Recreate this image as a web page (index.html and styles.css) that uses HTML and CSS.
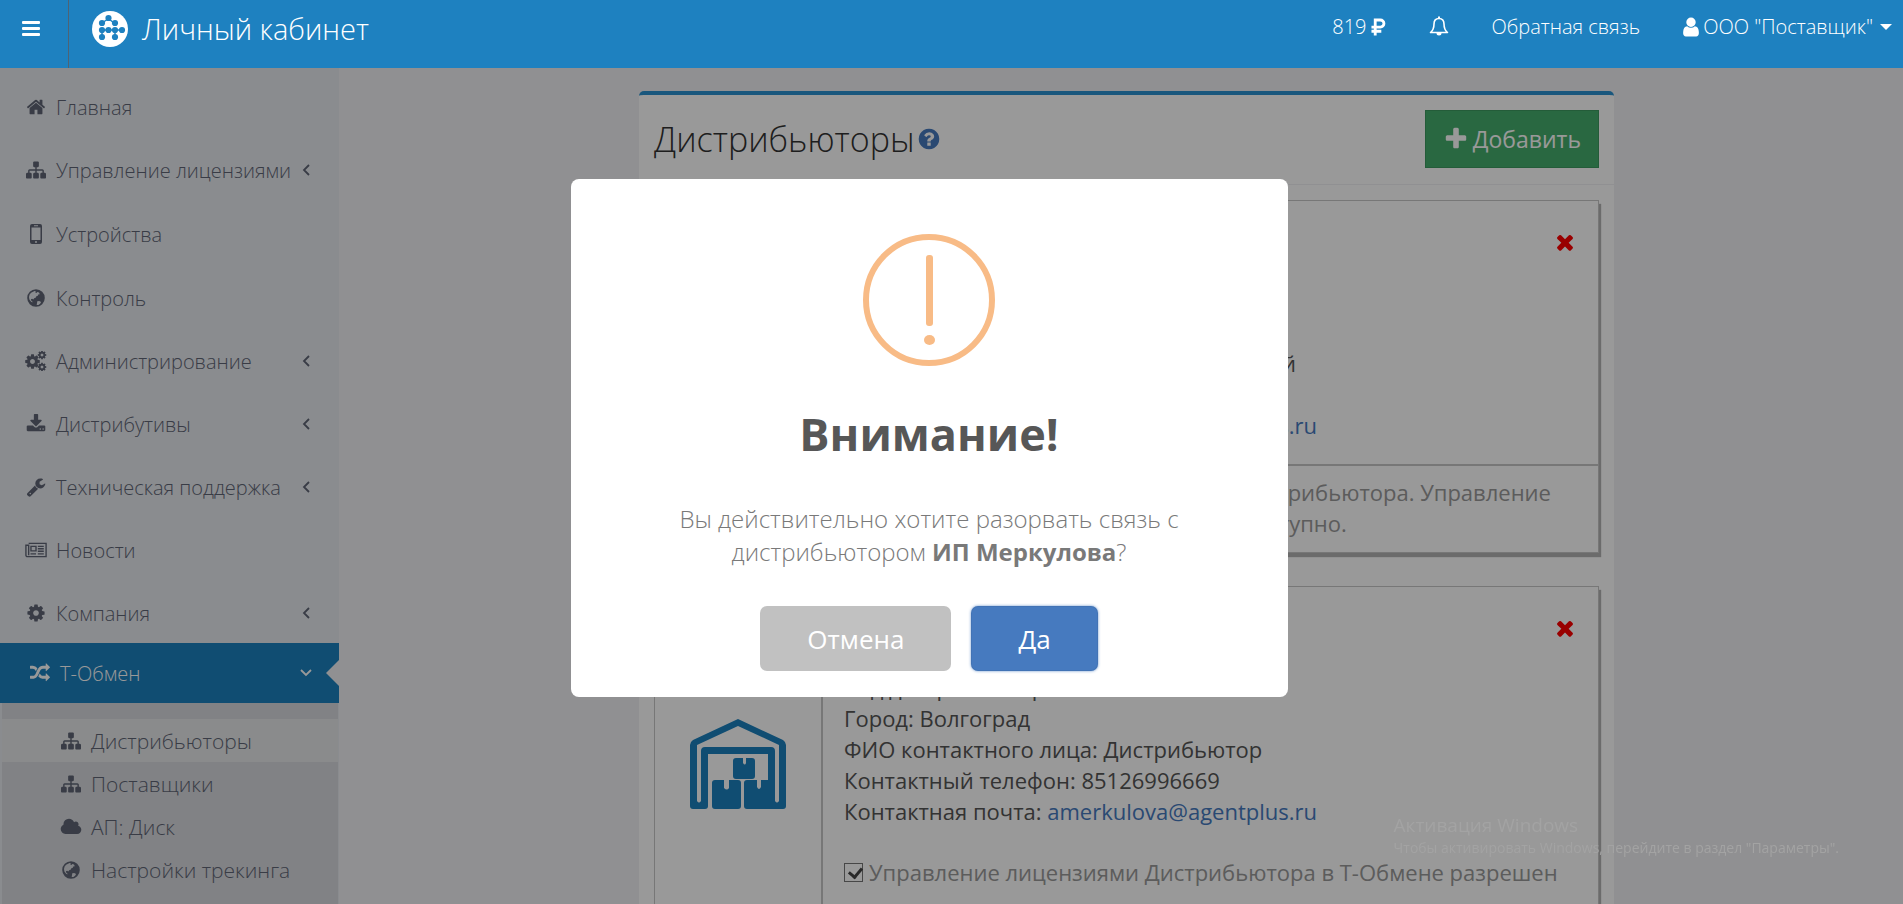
FILE: index.html
```html
<!DOCTYPE html>
<html lang="ru">
<head>
    <meta charset="UTF-8">
    <meta name="viewport" content="width=device-width, initial-scale=1.0">
    <title>Личный кабинет</title>
    <link rel="stylesheet" href="styles.css">
</head>
<body>
    <!-- Icon set -->
    <svg class="sprite" aria-hidden="true">
        <symbol id="home" viewBox="0 0 1792 1792"><path d="M1472 992v480q0 26-19 45t-45 19h-384v-384h-256v384h-384q-26 0-45-19t-19-45v-480q0-1 .5-3t.5-3l575-474 575 474q1 2 1 6zm223-69l-62 74q-8 9-21 11h-3q-13 0-21-7l-692-577-692 577q-12 8-24 7-13-2-21-11l-62-74q-8-10-7-23.5t11-21.5l719-599q32-26 76-26t76 26l244 204v-195q0-14 9-23t23-9h192q14 0 23 9t9 23v408l219 182q10 8 11 21.5t-7 23.5z"/></symbol>
        <symbol id="sitemap" viewBox="0 0 1792 1792"><path d="M1792 1248v320q0 40-28 68t-68 28h-320q-40 0-68-28t-28-68v-320q0-40 28-68t68-28h96v-192h-512v192h96q40 0 68 28t28 68v320q0 40-28 68t-68 28h-320q-40 0-68-28t-28-68v-320q0-40 28-68t68-28h96v-192h-512v192h96q40 0 68 28t28 68v320q0 40-28 68t-68 28h-320q-40 0-68-28t-28-68v-320q0-40 28-68t68-28h96v-192q0-52 38-90t90-38h512v-192h-96q-40 0-68-28t-28-68v-320q0-40 28-68t68-28h320q40 0 68 28t28 68v320q0 40-28 68t-68 28h-96v192h512q52 0 90 38t38 90v192h96q40 0 68 28t28 68z"/></symbol>
        <symbol id="mobile" viewBox="0 0 20 20"><path fill-rule="evenodd" d="M6 0h8a2 2 0 0 1 2 2v16a2 2 0 0 1-2 2H6a2 2 0 0 1-2-2V2a2 2 0 0 1 2-2zM5.500 3.500v12.500h9V3.500zM8 1.200v1h4v-1zM10 17a1 1 0 1 0 0 2 1 1 0 0 0 0-2z"/></symbol>
        <symbol id="globe" viewBox="0 0 20 20"><path fill-rule="evenodd" d="M10 1.200a8.800 8.800 0 1 0 0 17.600 8.800 8.800 0 0 0 0-17.600zM8.500 3l1.300.2-.5 1.300 1.200.5.800-1 1.700.6.8 1.600-1.600.3-.4 1.200-1.500.5-.4 1.300-1.700.7-.9 1.200-1.100-.7-1.300.5.300 1.500 1 .4.2 1.500-1.500-1.200-1.500-2-.4-2.300.6-2.500 1.500-1.900zM11.300 13.200l1.900-.3 1.900 1.200-1 1.700-1.700 1.100-1.700.1z"/></symbol>
        <symbol id="cog" viewBox="0 0 1792 1792"><path d="M1152 896q0-106-75-181t-181-75-181 75-75 181 75 181 181 75 181-75 75-181zm512-109v222q0 12-8 23t-20 13l-185 28q-19 54-39 91 35 50 107 138 10 12 10 25t-9 23q-27 37-99 108t-94 71q-12 0-26-9l-138-108q-44 23-91 38-16 136-29 186-7 28-36 28h-222q-14 0-24.500-8.500t-11.500-21.500l-28-184q-49-16-90-37l-141 107q-10 9-25 9-14 0-25-11-126-114-165-168-7-10-7-23 0-12 8-23 15-21 51-66.500t54-70.500q-27-50-41-99l-183-27q-13-2-21-12.500t-8-23.500v-222q0-12 8-23t19-13l186-28q14-46 39-92-40-57-107-138-10-12-10-24 0-10 9-23 26-36 98.500-107.500t94.500-71.500q13 0 26 10l138 107q44-23 91-38 16-136 29-186 7-28 36-28h222q14 0 24.500 8.500t11.500 21.500l28 184q49 16 90 37l142-107q9-9 24-9 13 0 25 10 129 119 165 170 7 8 7 22 0 12-8 23-15 21-51 66.500t-54 70.500q26 50 41 98l183 28q13 2 21 12.500t8 23.500z"/></symbol>
        <symbol id="cogs" viewBox="0 0 22 20"><use href="#cog" x="-1" y="2" width="17" height="17"/><use href="#cog" x="12" y="-1" width="10" height="10"/><use href="#cog" x="12" y="11" width="10" height="10"/></symbol>
        <symbol id="download" viewBox="0 0 1792 1792"><path d="M1344 1344q0-26-19-45t-45-19-45 19-19 45 19 45 45 19 45-19 19-45zm256 0q0-26-19-45t-45-19-45 19-19 45 19 45 45 19 45-19 19-45zm128-224v320q0 40-28 68t-68 28h-1472q-40 0-68-28t-28-68v-320q0-40 28-68t68-28h465l135 136q58 56 136 56t136-56l136-136h464q40 0 68 28t28 68zm-325-569q17 41-14 70l-448 448q-18 19-45 19t-45-19l-448-448q-31-29-14-70 17-39 59-39h256v-448q0-26 19-45t45-19h256q26 0 45 19t19 45v448h256q42 0 59 39z"/></symbol>
        <symbol id="wrench" viewBox="0 0 1792 1792"><path d="M448 1472q0-26-19-45t-45-19-45 19-19 45 19 45 45 19 45-19 19-45zm644-420l-682 682q-37 37-90 37-52 0-91-37l-106-108q-38-36-38-90 0-53 38-91l681-681q39 98 114.500 173.500t173.500 114.500zm634-435q0 39-23 106-47 134-164.500 217.500t-258.500 83.500q-185 0-316.500-131.500t-131.500-316.500 131.500-316.500 316.500-131.500q58 0 121.500 16.500t107.500 46.500q16 11 16 28t-16 28l-293 169v224l193 107q5-3 79-48.500t135.500-81 70.500-35.500q15 0 23.500 10t8.500 25z"/></symbol>
        <symbol id="news" viewBox="0 0 24 20"><path fill="none" stroke="currentColor" stroke-width="1.500" d="M4 2.800h19v14.400H2.500A1.500 1.500 0 0 1 1 15.700V4.800h3v11M6.500 6h5.500v5H6.500zM6 14.200h6M14 6h6.500M14 8.700h6.500M14 11.400h6.500M14 14.200h6.500"/></symbol>
        <symbol id="random" viewBox="0 0 1792 1792"><path d="M666 481q-60 92-137 273-22-45-37-72.500t-40.500-63.500-51-56.500-63-35-81.500-14.500h-224q-14 0-23-9t-9-23v-192q0-14 9-23t23-9h224q250 0 410 225zm1126 799q0 14-9 23l-320 320q-9 9-23 9-13 0-22.500-9.500t-9.500-22.500v-192q-32 0-85 .5t-81 1-73-1-71-5-64-10.500-63-18.500-58-28.500-59-40-55-53.500-56-69.500q59-93 136-273 22 45 37 72.500t40.500 63.500 51 56.500 63 35 81.500 14.500h256v-192q0-14 9-23t23-9q12 0 24 10l319 319q9 9 9 23zm0-896q0 14-9 23l-320 320q-9 9-23 9-13 0-22.500-9.500t-9.500-22.500v-192h-256q-48 0-87 15t-69 45-51 61.500-45 77.500q-32 62-78 171-29 66-49.500 111t-54 105-64 100-74 83-90 68.500-106.500 42-128 16.500h-224q-14 0-23-9t-9-23v-192q0-14 9-23t23-9h224q48 0 87-15t69-45 51-61.500 45-77.500q32-62 78-171 29-66 49.500-111t54-105 64-100 74-83 90-68.500 106.500-42 128-16.500h256v-192q0-14 9-23t23-9q12 0 24 10l319 319q9 9 9 23z"/></symbol>
        <symbol id="cloud" viewBox="0 0 2048 1792"><path d="M1984 1152q0 159-112.500 271.500t-271.500 112.500h-1088q-185 0-316.500-131.500t-131.500-316.500q0-132 71-241.500t187-163.500q-2-28-2-43 0-212 150-362t362-150q158 0 286.500 88t187.500 230q70-62 166-62 106 0 181 75t75 181q0 75-41 138 129 30 213 134.500t84 239.500z"/></symbol>
        <symbol id="plus" viewBox="0 0 1792 1792"><path d="M1600 736v192q0 40-28 68t-68 28h-416v416q0 40-28 68t-68 28h-192q-40 0-68-28t-28-68v-416h-416q-40 0-68-28t-28-68v-192q0-40 28-68t68-28h416v-416q0-40 28-68t68-28h192q40 0 68 28t28 68v416h416q40 0 68 28t28 68z"/></symbol>
        <symbol id="times" viewBox="0 0 1792 1792"><path d="M1490 1322q0 40-28 68l-136 136q-28 28-68 28t-68-28l-294-294-294 294q-28 28-68 28t-68-28l-136-136q-28-28-28-68t28-68l294-294-294-294q-28-28-28-68t28-68l136-136q28-28 68-28t68 28l294 294 294-294q28-28 68-28t68 28l136 136q28 28 28 68t-28 68l-294 294 294 294q28 28 28 68z"/></symbol>
        <symbol id="question" viewBox="0 0 1792 1792"><path d="M1024 1376v-192q0-14-9-23t-23-9h-192q-14 0-23 9t-9 23v192q0 14 9 23t23 9h192q14 0 23-9t9-23zm256-672q0-88-55.500-163t-138.500-116-170-41q-243 0-371 213-15 24 8 42l132 100q7 6 19 6 16 0 25-12 53-68 86-92 34-24 86-24 48 0 85.500 26t37.500 59q0 38-20 61t-68 45q-63 28-115.500 86.500t-52.500 125.500v36q0 14 9 23t23 9h192q14 0 23-9t9-23q0-19 21.500-49.500t54.500-49.500q32-18 49-28.500t46-35 44.500-48 28-60.500 12.500-81zm384 192q0 209-103 385.500t-279.500 279.500-385.500 103-385.500-103-279.500-279.500-103-385.500 103-385.500 279.500-279.500 385.500-103 385.500 103 279.500 279.500 103 385.500z"/></symbol>
        <symbol id="user" viewBox="0 0 1792 1792"><path d="M1536 1399q0 109-62.500 187t-150.500 78h-854q-88 0-150.500-78t-62.500-187q0-85 8.500-160.500t31.500-152 58.500-131 94-89 134.500-34.500q131 128 313 128t313-128q76 0 134.500 34.500t94 89 58.500 131 31.500 152 8.500 160.500zm-256-887q0 159-112.500 271.500t-271.500 112.500-271.500-112.500-112.500-271.500 112.500-271.500 271.500-112.500 271.500 112.500 112.500 271.500z"/></symbol>
        <symbol id="chevron" viewBox="0 0 12 12"><path fill="none" stroke="currentColor" stroke-width="1.800" d="M9 1L4 6l5 5"/></symbol>
        <symbol id="bell" viewBox="0 0 20 20"><path fill="none" stroke="currentColor" stroke-width="1.600" stroke-linejoin="round" d="M10 2c-3.500 0-5 2.500-5 5.500 0 4-1 6.500-3.500 8.500h17c-2.500-2-3.500-4.500-3.500-8.500C15 4.500 13.500 2 10 2z"/><path d="M9 0h2v2H9zM7.500 16.500h5a2.500 2.500 0 0 1-5 0z"/></symbol>
        <symbol id="ruble" viewBox="0 0 16 18"><path fill="none" stroke="currentColor" stroke-width="3" d="M4.500 18V1.500H10a3.700 3.700 0 0 1 0 7.600H0.500M0.500 13.500H11"/></symbol>
        <symbol id="bars" viewBox="0 0 18 15"><rect width="18" height="3" rx="1"/><rect y="6" width="18" height="3" rx="1"/><rect y="12" width="18" height="3" rx="1"/></symbol>
        <symbol id="warehouse" viewBox="0 0 96 90">
            <path fill-rule="evenodd" d="M48 0l45 21q3 2 3 5v61q0 3-3 3H57q-3 0-3-3V64q0-3 3-3h10v7q2 4 4 0v-7h7V35H18v52q0 3-3 3H3q-3 0-3-3V26q0-3 3-5zM48 7L7 26v56q2 3 4 0V32q0-4 4-4h66q4 0 4 4v50q2 3 4 0V26z"/>
            <path d="M46 39h7v5q2 3 3 0v-5h6q3 0 3 3v15q0 3-3 3H46q-3 0-3-3V42q0-3 3-3zM25 61h9v8q3 3 5 0v-8h9q3 0 3 3v23q0 3-3 3H25q-3 0-3-3V64q0-3 3-3z"/>
        </symbol>
    </svg>

    <header class="header">
        <button class="menu_toggle" type="button" aria-label="Меню"><svg class="bars"><use href="#bars"/></svg></button>
        <a class="brand" href="#">
            <svg class="brand_logo" viewBox="0 0 36 36" aria-hidden="true">
                <circle cx="18" cy="18" r="18" fill="#fff"/>
                <path stroke="#1e81c0" stroke-width="1.500" d="M10 12l6-4M22 12l-5-4M10 19h20M10 19v7M23 19v7"/>
                <g fill="#1e81c0">
                    <circle cx="16.500" cy="7" r="3.100"/><circle cx="10" cy="12" r="3.100"/><circle cx="23" cy="12" r="3.100"/>
                    <circle cx="10" cy="19" r="3.100"/><circle cx="16.500" cy="19" r="3.100"/><circle cx="23" cy="19" r="3.100"/><circle cx="30" cy="19" r="3.100"/>
                    <circle cx="10" cy="26" r="3.100"/><circle cx="23" cy="26" r="3.100"/>
                </g>
            </svg>
            Личный кабинет
        </a>
        <nav class="top_nav">
            <a href="#" class="balance">819 <svg class="ruble"><use href="#ruble"/></svg></a>
            <a href="#" aria-label="Уведомления"><svg class="bell"><use href="#bell"/></svg></a>
            <a href="#">Обратная связь</a>
            <a href="#" class="account"><svg class="user"><use href="#user"/></svg>ООО "Поставщик"<span class="caret"></span></a>
        </nav>
    </header>

    <div class="page">
        <aside class="sidebar">
            <ul class="menu">
                <li><a href="#"><svg class="icon"><use href="#home"/></svg>Главная</a></li>
                <li><a href="#"><svg class="icon"><use href="#sitemap"/></svg>Управление лицензиями<svg class="arrow"><use href="#chevron"/></svg></a></li>
                <li><a href="#" class="tall"><svg class="icon"><use href="#mobile"/></svg>Устройства</a></li>
                <li><a href="#"><svg class="icon"><use href="#globe"/></svg>Контроль</a></li>
                <li><a href="#"><svg class="icon"><use href="#cogs"/></svg>Администрирование<svg class="arrow"><use href="#chevron"/></svg></a></li>
                <li><a href="#"><svg class="icon"><use href="#download"/></svg>Дистрибутивы<svg class="arrow"><use href="#chevron"/></svg></a></li>
                <li><a href="#"><svg class="icon"><use href="#wrench"/></svg>Техническая поддержка<svg class="arrow"><use href="#chevron"/></svg></a></li>
                <li><a href="#"><svg class="icon"><use href="#news"/></svg>Новости</a></li>
                <li><a href="#"><svg class="icon"><use href="#cog"/></svg>Компания<svg class="arrow"><use href="#chevron"/></svg></a></li>
                <li class="active">
                    <a href="#"><svg class="icon"><use href="#random"/></svg>Т-Обмен<svg class="arrow arrow_open"><use href="#chevron"/></svg></a>
                    <ul class="submenu">
                        <li class="current"><a href="#"><svg class="icon"><use href="#sitemap"/></svg>Дистрибьюторы</a></li>
                        <li><a href="#"><svg class="icon"><use href="#sitemap"/></svg>Поставщики</a></li>
                        <li><a href="#"><svg class="icon"><use href="#cloud"/></svg>АП: Диск</a></li>
                        <li><a href="#"><svg class="icon"><use href="#globe"/></svg>Настройки трекинга</a></li>
                    </ul>
                </li>
            </ul>
        </aside>

        <main class="content">
            <section class="panel">
                <div class="panel_head">
                    <h1>Дистрибьюторы<svg class="help"><use href="#question"/></svg></h1>
                    <button class="btn_add" type="button"><svg class="plus"><use href="#plus"/></svg>Добавить</button>
                </div>
                <div class="panel_body">
                    <article class="card">
                        <div class="card_main">
                            <div class="card_logo"><svg class="warehouse"><use href="#warehouse"/></svg></div>
                            <div class="card_info">
                                <button class="remove" type="button" aria-label="Удалить"><svg><use href="#times"/></svg></button>
                                <p>ООО Дистрибьютор</p>
                                <p>Код дистрибьютора: 1024</p>
                                <p>Город: Волгоград</p>
                                <p>ФИО контактного лица: Меркулов Андрей</p>
                                <p>Контактный телефон: 85126996669</p>
                                <p>Контактная почта: <a href="#">amerkulova@agentplus.ru</a></p>
                            </div>
                        </div>
                        <div class="card_note">Ожидается подтверждение связи от Дистрибьютора. Управление лицензиями Дистрибьютора пока недоступно.</div>
                    </article>

                    <article class="card">
                        <div class="card_main">
                            <div class="card_logo"><svg class="warehouse"><use href="#warehouse"/></svg></div>
                            <div class="card_info">
                                <button class="remove" type="button" aria-label="Удалить"><svg><use href="#times"/></svg></button>
                                <p>ИП Меркулова</p>
                                <p>Код дистрибьютора: 1025</p>
                                <p>Город: Волгоград</p>
                                <p>ФИО контактного лица: Дистрибьютор</p>
                                <p>Контактный телефон: 85126996669</p>
                                <p>Контактная почта: <a href="#">amerkulova@agentplus.ru</a></p>
                                <label class="allow"><input type="checkbox" checked>Управление лицензиями Дистрибьютора в Т-Обмене разрешен</label>
                            </div>
                        </div>
                    </article>
                </div>
            </section>
        </main>
    </div>

    <div class="overlay"></div>

    <!-- Confirm dialog -->
    <div class="modal" role="dialog" aria-labelledby="modalTitle">
        <div class="modal_icon"><span class="mark_line"></span><span class="mark_dot"></span></div>
        <h2 id="modalTitle">Внимание!</h2>
        <p>Вы действительно хотите разорвать связь с дистрибьютором <b>ИП Меркулова</b>?</p>
        <div class="modal_buttons">
            <button class="btn_cancel" type="button">Отмена</button>
            <button class="btn_ok" type="button">Да</button>
        </div>
    </div>

    <div class="watermark">
        <div class="watermark_title">Активация Windows</div>
        <div>Чтобы активировать Windows, перейдите в раздел "Параметры".</div>
    </div>
</body>
</html>
```
FILE: styles.css
```css
* {
    box-sizing: border-box;
}

body {
    margin: 0;
    height: 100vh;
    overflow: hidden;
    font-family: 'Open Sans', sans-serif;
    font-size: 20px;
    font-weight: 300;
    background: #f1f1f4;
    color: #555;
}

a {
    color: #467abf;
    text-decoration: none;
}

b {
    font-weight: 700;
}

button {
    font-family: inherit;
    border: none;
    cursor: pointer;
}

svg {
    fill: currentColor;
    flex-shrink: 0;
}

.sprite {
    position: absolute;
    width: 0;
    height: 0;
}

/* Header stays above the overlay */
.header {
    position: relative;
    z-index: 20;
    display: flex;
    height: 68px;
    background: #1e81c0;
    color: #fff;
}

.header a {
    color: #fff;
}

.menu_toggle {
    width: 69px;
    padding: 0 28px 11px 22px;
    background: none;
    border-right: 1px solid #4d6375;
    color: #fff;
}

.bars {
    display: block;
    width: 18px;
    height: 15px;
}

.brand {
    display: flex;
    align-items: center;
    gap: 14px;
    padding: 0 0 11px 23px;
    font-size: 29px;
}

.brand_logo {
    width: 36px;
    height: 36px;
}

.top_nav {
    display: flex;
    gap: 43px;
    align-items: center;
    margin-left: auto;
    padding: 0 11px 15px 0;
}

.top_nav a {
    display: flex;
    align-items: center;
    gap: 4px;
}

.ruble {
    width: 15px;
    height: 18px;
}

.bell {
    width: 20px;
    height: 21px;
}

.user {
    width: 22px;
    height: 22px;
    margin: 0 -3px;
}

.caret {
    margin-left: 3px;
    border: 6px solid transparent;
    border-top-color: #fff;
    border-bottom: 0;
}

.page {
    display: flex;
    height: calc(100vh - 68px);
}

/* Sidebar */
.sidebar {
    width: 339px;
    flex-shrink: 0;
    background: #e6e9ee;
    overflow: hidden;
}

.menu,
.submenu {
    margin: 0;
    padding: 0;
    list-style: none;
}

.menu {
    padding-top: 6px;
}

.menu > li {
    margin-top: 3px;
}

.menu a {
    display: flex;
    align-items: center;
    height: 60px;
    padding: 0 27px 0 25px;
    color: #5f6575;
    white-space: nowrap;
}

.menu .tall {
    height: 62px;
}

.icon {
    width: 22px;
    height: 20px;
    margin-right: 9px;
}

.arrow {
    width: 12px;
    height: 12px;
    margin-left: auto;
}

.arrow_open {
    transform: rotate(-90deg);
}

.menu > .active {
    margin-top: 0;
}

.active > a {
    position: relative;
    padding-left: 29px;
    background: #1b80be;
    color: #fff;
}

.active > a::after {
    content: '';
    position: absolute;
    right: 0;
    border: 13px solid transparent;
    border-right-color: #f1f1f4;
    border-left: 0;
}

.submenu {
    height: 400px;
    margin: 0 1px 0 2px;
    padding-top: 16px;
    background: #d7d9de;
    font-size: 21px;
}

.submenu a {
    height: 43px;
    padding-left: 58px;
}

.submenu .current {
    background: #e6e8e9;
}

/* Content */
.content {
    flex: 1;
    padding: 23px 289px 0 300px;
}

.panel {
    background: #fff;
    border-top: 4px solid #2b92d0;
    border-radius: 5px 5px 0 0;
}

.panel_head {
    display: flex;
    align-items: center;
    justify-content: space-between;
    padding: 15px 15px 16px;
    border-bottom: 1px solid #f1f1f4;
}

.panel h1 {
    display: flex;
    align-items: center;
    gap: 2px;
    margin: 0;
    font-size: 34px;
    font-weight: 300;
    line-height: 44px;
    color: #333;
}

.help {
    width: 24px;
    height: 24px;
    color: #467abf;
}

.btn_add {
    display: flex;
    align-items: center;
    gap: 4px;
    height: 58px;
    padding: 0 17px;
    border: 1px solid #3d9a60;
    background: #45ae6d;
    font-size: 23px;
    color: #fff;
}

.plus {
    width: 26px;
    height: 26px;
}

.panel_body {
    display: flex;
    flex-direction: column;
    gap: 33px;
    padding: 15px 15px 0;
}

.card {
    border: 1px solid #c6c6c6;
    box-shadow: 2px 4px 1px #b2b2b2;
    font-size: 22px;
    font-weight: 400;
    line-height: 31px;
}

.card_main {
    display: flex;
}

.card_logo {
    display: flex;
    align-items: center;
    justify-content: center;
    width: 168px;
    border-right: 2px solid #c6c6c6;
    color: #1b80be;
}

.warehouse {
    width: 96px;
    height: 90px;
}

.card_info {
    flex: 1;
    padding: 54px 21px 23px;
}

.card_info p {
    margin: 0;
}

.remove {
    float: right;
    margin-top: -25px;
    padding: 0;
    background: none;
    color: #f00;
}

.remove svg {
    display: block;
    width: 24px;
    height: 24px;
}

.card_note {
    padding: 11px 21px 13px 189px;
    border-top: 2px solid #c6c6c6;
    color: #999;
}

.allow {
    display: flex;
    align-items: center;
    gap: 6px;
    margin: 30px 0;
    color: #999;
    white-space: nowrap;
}

.allow input {
    appearance: none;
    width: 19px;
    height: 19px;
    margin: 0;
    border: 1px solid #777;
}

.allow input:checked::before {
    content: '';
    display: block;
    width: 6px;
    height: 10px;
    margin: 1px 0 0 6px;
    border: solid #444;
    border-width: 0 3px 3px 0;
    transform: rotate(40deg);
}

.overlay {
    position: fixed;
    inset: 0;
    z-index: 10;
    background: rgba(0, 0, 0, 0.4);
}

/* Confirm dialog */
.modal {
    position: fixed;
    top: 50%;
    left: 50%;
    z-index: 30;
    width: 717px;
    margin: -273px 0 0 -381px;
    padding: 55px 24px 26px;
    border-radius: 8px;
    background: #fff;
    text-align: center;
}

.modal_icon {
    display: flex;
    flex-direction: column;
    align-items: center;
    gap: 9px;
    width: 132px;
    height: 132px;
    margin: 0 auto;
    padding-top: 15px;
    border: 6px solid #f8bb86;
    border-radius: 50%;
}

.mark_line {
    width: 7px;
    height: 71px;
    border-radius: 3px;
    background: #f8bb86;
}

.mark_dot {
    width: 11px;
    height: 10px;
    border-radius: 50%;
    background: #f8bb86;
}

.modal h2 {
    margin: 38px 0;
    font-size: 45px;
    font-weight: 700;
    line-height: 60px;
    color: #575757;
}

.modal p {
    margin: 0;
    font-size: 24px;
    line-height: 33px;
    color: #797979;
}

.modal_buttons {
    display: flex;
    justify-content: center;
    gap: 20px;
    margin-top: 38px;
}

.modal_buttons button {
    height: 65px;
    padding: 0 47px;
    border-radius: 7px;
    font-size: 26px;
    color: #fff;
}

.btn_cancel {
    background: #c1c1c1;
}

.btn_ok {
    background: #467abf;
    box-shadow: 0 0 3px rgba(70, 122, 191, 0.8), inset 0 0 0 1px rgba(0, 0, 0, 0.05);
}

.watermark {
    position: fixed;
    right: 64px;
    bottom: 46px;
    z-index: 40;
    font-size: 14px;
    font-weight: 400;
    line-height: 20px;
    color: #a3a3a3;
    pointer-events: none;
}

.watermark_title {
    font-size: 19px;
    line-height: 26px;
}
```
